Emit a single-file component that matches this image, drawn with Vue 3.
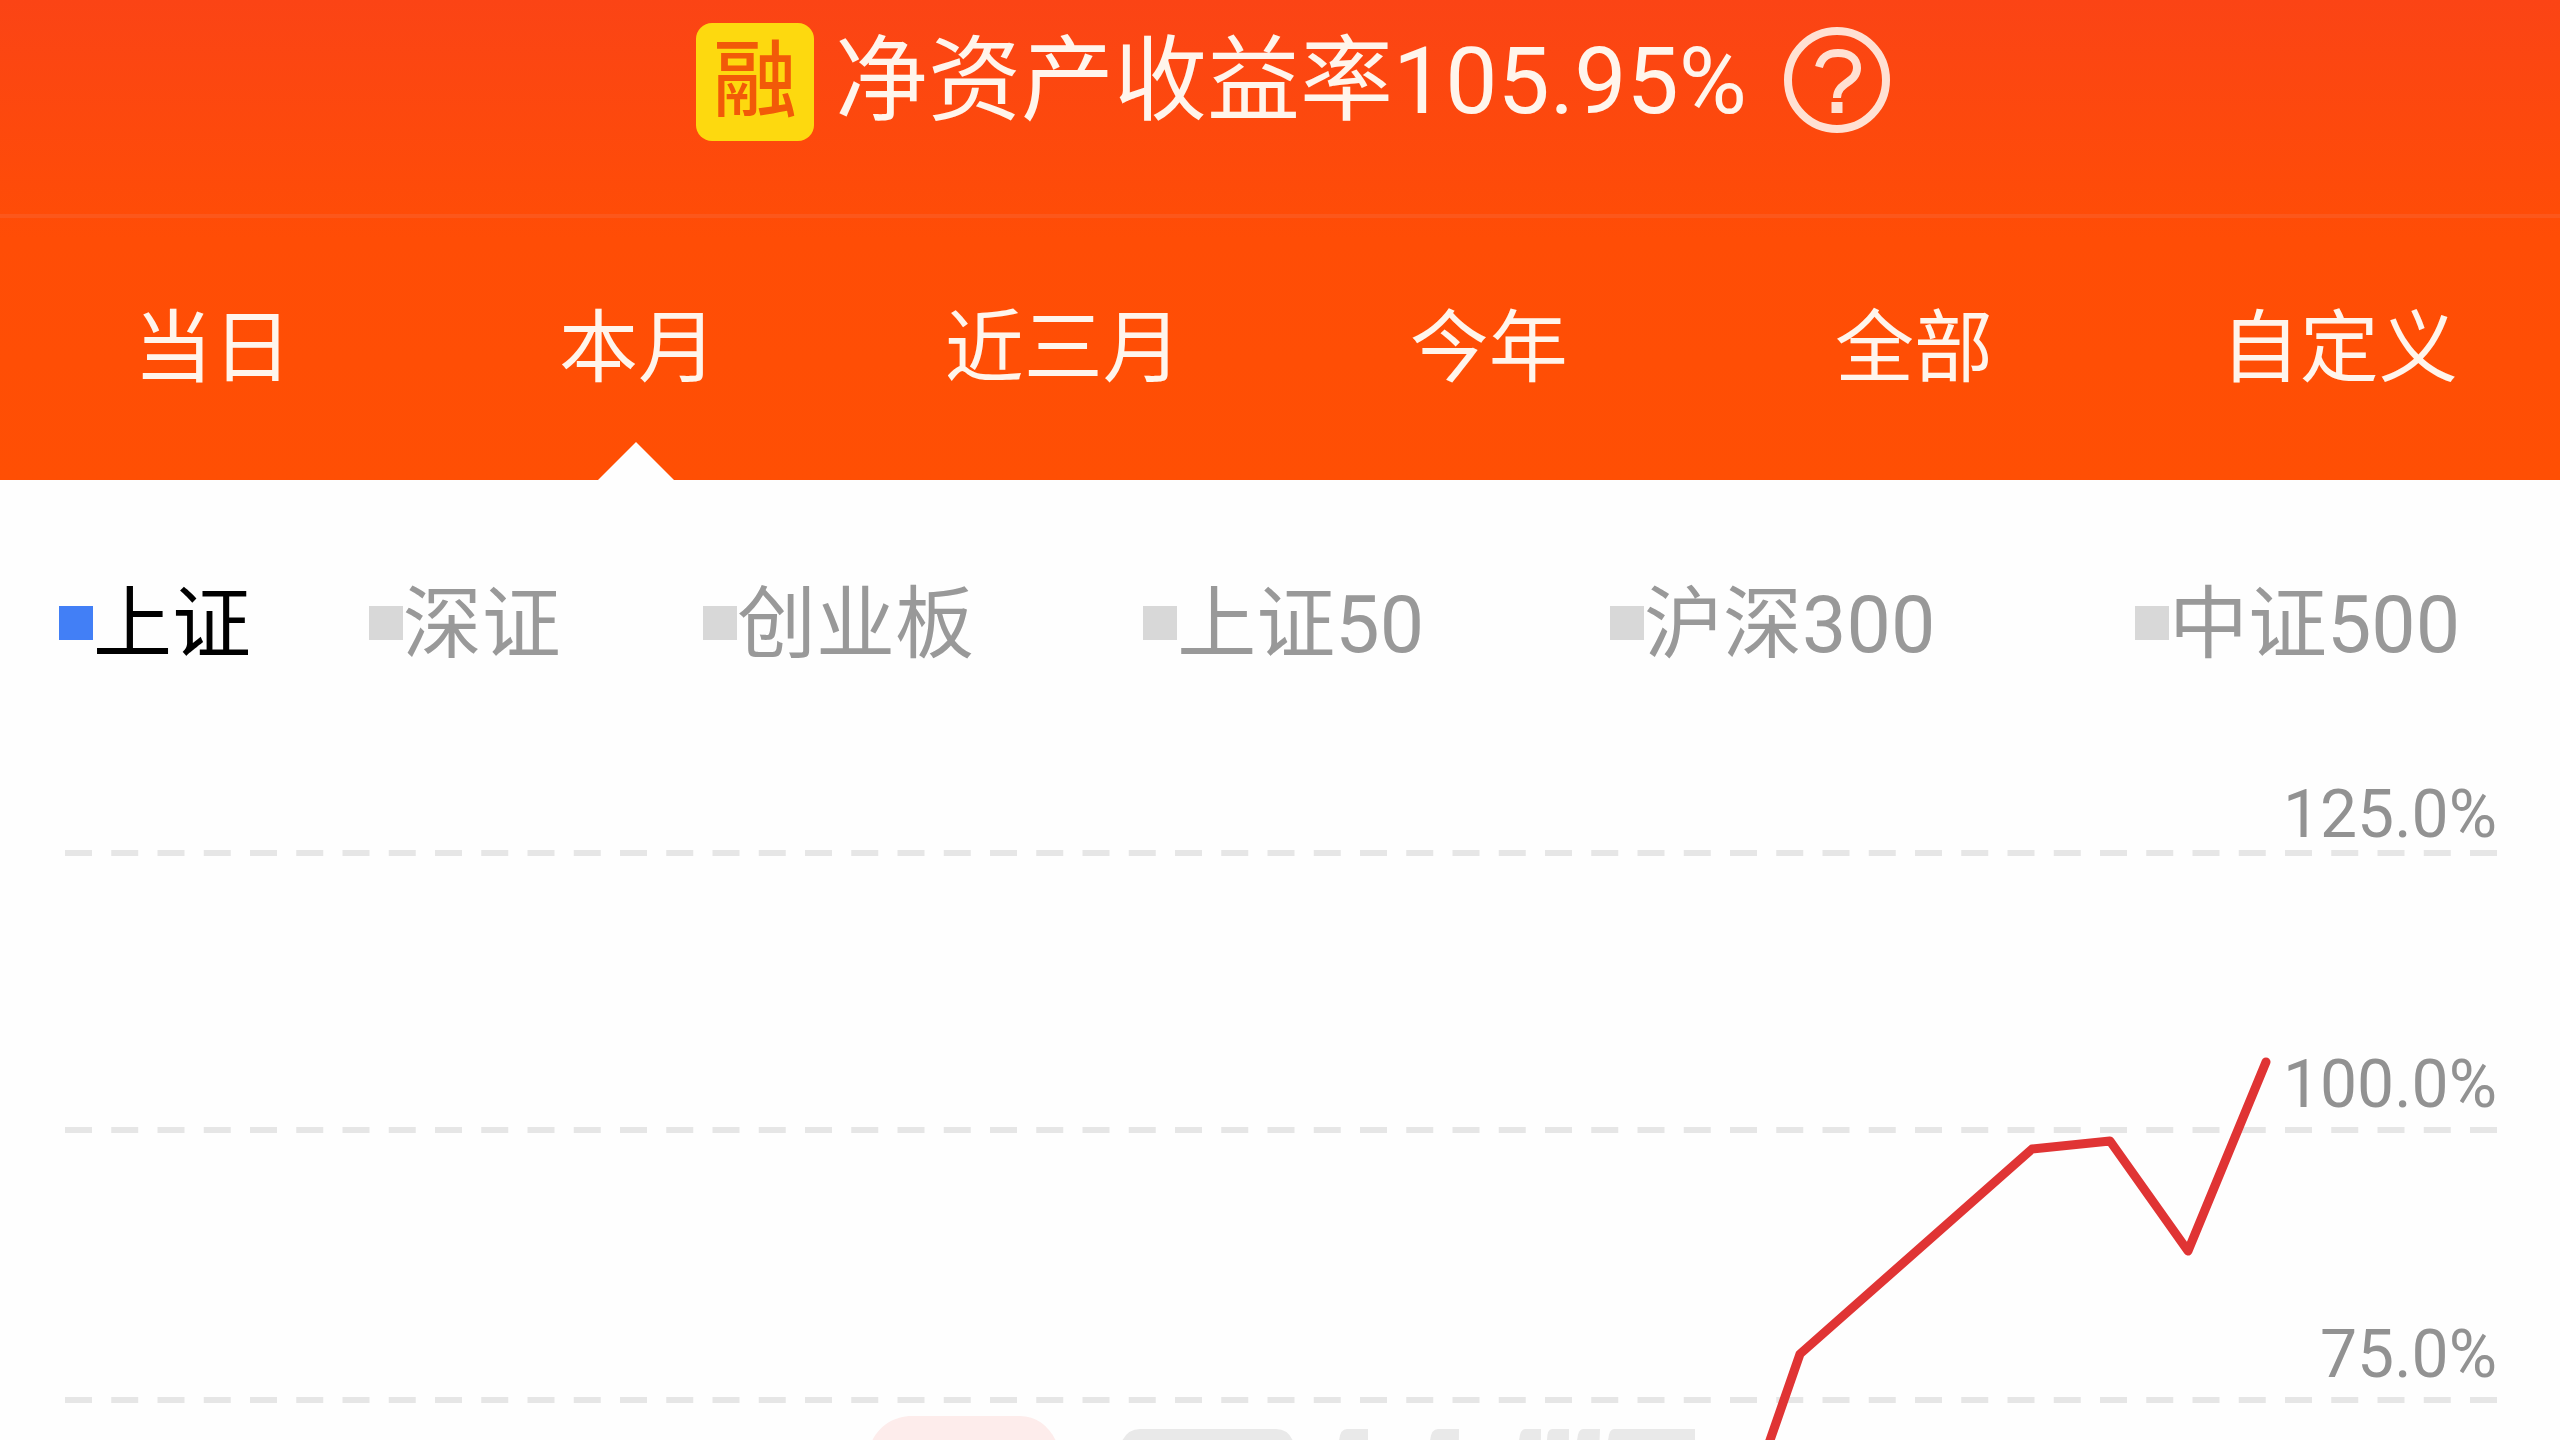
<!-- 收益走势 -->
<template>
  <div class="profit-page">
    <header class="header">
      <div class="summary">
        <span class="badge">融</span>
        <h1 class="title">净资产收益率{{ profitRate }}</h1>
        <button class="help-btn" type="button" title="说明">
          <svg viewBox="0 0 106 106" fill="none" stroke="currentColor" aria-hidden="true">
            <circle cx="53" cy="53" r="49" stroke-width="8" />
            <path d="M35 40C38 29 45 26 54 26C66 26 73 32 73 41C73 56 53 55 53 71" stroke-width="8" />
            <path d="M53 75V86" stroke-width="11" />
          </svg>
        </button>
      </div>
      <nav class="tabs">
        <button
          v-for="tab in tabs"
          :key="tab"
          type="button"
          class="tab"
          :class="{ active: tab === activeTab }"
          @click="activeTab = tab"
        >
          {{ tab }}
        </button>
      </nav>
    </header>

    <ul class="legend">
      <li v-for="item in indexes" :key="item">
        <button
          type="button"
          class="legend-btn"
          :class="{ active: item === activeIndex }"
          @click="activeIndex = item"
        >
          <span class="marker"></span>{{ item }}
        </button>
      </li>
    </ul>

    <section class="chart">
      <svg class="watermark" viewBox="-2 -1 840 120" aria-hidden="true">
        <path
          fill="#fdeceb"
          d="M40 0H148C164 0 177 10 184 25L194 120H-8L0 25C7 10 22 0 40 0Z"
        />
        <g fill="#e9e9e9">
          <path d="M268 13H404Q416 13 421 25V120H240L250 25Q256 13 268 13Z" />
          <path d="M475 13H496V120H459L467 25Q468 13 475 13Z" />
          <path d="M566 13H587L586 120H551L558 25Q559 13 566 13Z" />
          <path d="M653 13H669L668 120H640L647 25Q648 13 653 13Z" />
          <path d="M680 13H697L696 120H668L675 25Q675 13 680 13Z" />
          <path d="M711 13H728L724 120H698L705 25Q706 13 711 13Z" />
          <path d="M742 13H823V120H729L736 25Q737 13 742 13Z" />
        </g>
      </svg>
      <div v-for="tick in ticks" :key="tick" class="grid-row">
        <span class="tick">{{ tick }}</span>
        <svg class="grid-line" aria-hidden="true">
          <line x1="0" y1="3" x2="100%" y2="3" pathLength="631" stroke-dasharray="7 5" />
        </svg>
      </div>
      <svg class="curve" viewBox="0 0 2560 660" preserveAspectRatio="none" aria-hidden="true">
        <polyline :points="points" vector-effect="non-scaling-stroke" />
      </svg>
    </section>
  </div>
</template>

<script setup>
import { computed, ref } from 'vue'

const profitRate = ref('105.95%')

// 时间范围
const tabs = ['当日', '本月', '近三月', '今年', '全部', '自定义']
const activeTab = ref('本月')

// 对比指数
const indexes = ['上证', '深证', '创业板', '上证50', '沪深300', '中证500']
const activeIndex = ref('上证')

// 纵轴刻度
const ticks = ['125.0%', '100.0%', '75.0%']

// 收益曲线
const curve = [
  [1768, 666],
  [1800, 574],
  [2032, 369],
  [2110, 361],
  [2188, 471],
  [2266, 282],
]
const points = computed(() => curve.map((p) => p.join(',')).join(' '))
</script>

<style>
body {
  margin: 0;
  background-color: #fefefe;
}
</style>

<style scoped>
.profit-page {
  display: flex;
  flex-direction: column;
  height: 100vh;
  overflow: hidden;
  font-family: Roboto, 'Noto Sans CJK SC', sans-serif;
  background-color: #fefefe;
}

button {
  padding: 0;
  border: none;
  background: none;
  font: inherit;
  color: inherit;
  cursor: pointer;
}

.header {
  flex: none;
  color: #fff5ec;
  background: linear-gradient(#fb4415, #ff4d06 50%, #ff4f04);
}

.summary {
  display: flex;
  align-items: center;
  justify-content: center;
  padding: 23px 0 73px 26px;
  border-bottom: 4px solid #fc571b;
}

.badge {
  width: 118px;
  height: 118px;
  border-radius: 16px;
  background-color: #fdd90f;
  color: #f25a08;
  font-size: 84px;
  font-weight: 500;
  line-height: 118px;
  text-align: center;
}

.title {
  margin: 0 37px 0 21px;
  font-size: 93px;
  font-weight: 400;
  line-height: 114px;
}

.help-btn {
  width: 106px;
  height: 106px;
  margin-bottom: 4px;
  color: #ffe1d3;
}

.help-btn svg {
  display: block;
}

.tabs {
  display: grid;
  grid-template-columns: repeat(6, 1fr);
  padding-right: 8px;
}

.tab {
  position: relative;
  height: 262px;
  font-size: 79px;
  line-height: 96px;
}

.tab.active::after {
  content: '';
  position: absolute;
  left: 50%;
  bottom: 0;
  width: 76px;
  height: 38px;
  margin-left: -40px;
  background-color: #fefefe;
  clip-path: polygon(50% 0, 100% 100%, 0 100%);
}

/* 列宽按文字长度分配 */
.legend {
  display: table;
  flex: none;
  width: 100%;
  margin: 0;
  padding: 96px 0 106px;
  list-style: none;
}

.legend li {
  display: table-cell;
  text-align: center;
}

.legend-btn {
  display: inline-flex;
  align-items: center;
  font-size: 79px;
  line-height: 98px;
  white-space: nowrap;
  color: #999;
}

.legend-btn.active {
  color: #000;
}

.marker {
  width: 34px;
  height: 34px;
  margin-bottom: 4px;
  background-color: #d8d8d8;
}

.legend-btn.active .marker {
  background-color: #427ff6;
}

.chart {
  position: relative;
  flex: 1;
  display: grid;
  grid-auto-rows: 270px;
  align-content: start;
  min-height: 0;
  padding: 0 63px 0 65px;
}

.grid-row {
  display: flex;
  flex-direction: column;
  gap: 7px;
}

.grid-row:nth-of-type(1) {
  gap: 0;
}

.tick {
  font-size: 66px;
  line-height: 70px;
  text-align: right;
  color: #929292;
}

.grid-line {
  display: block;
  width: 100%;
  height: 6px;
}

.grid-line line {
  stroke: #e6e6e6;
  stroke-width: 6px;
}

.curve {
  position: absolute;
  top: 0;
  left: 0;
  width: 100%;
  height: 660px;
}

.curve polyline {
  fill: none;
  stroke: #e03434;
  stroke-width: 9px;
  stroke-linecap: round;
  stroke-linejoin: round;
}

.watermark {
  position: absolute;
  top: 635px;
  left: 34%;
  width: 840px;
  height: 120px;
}
</style>
